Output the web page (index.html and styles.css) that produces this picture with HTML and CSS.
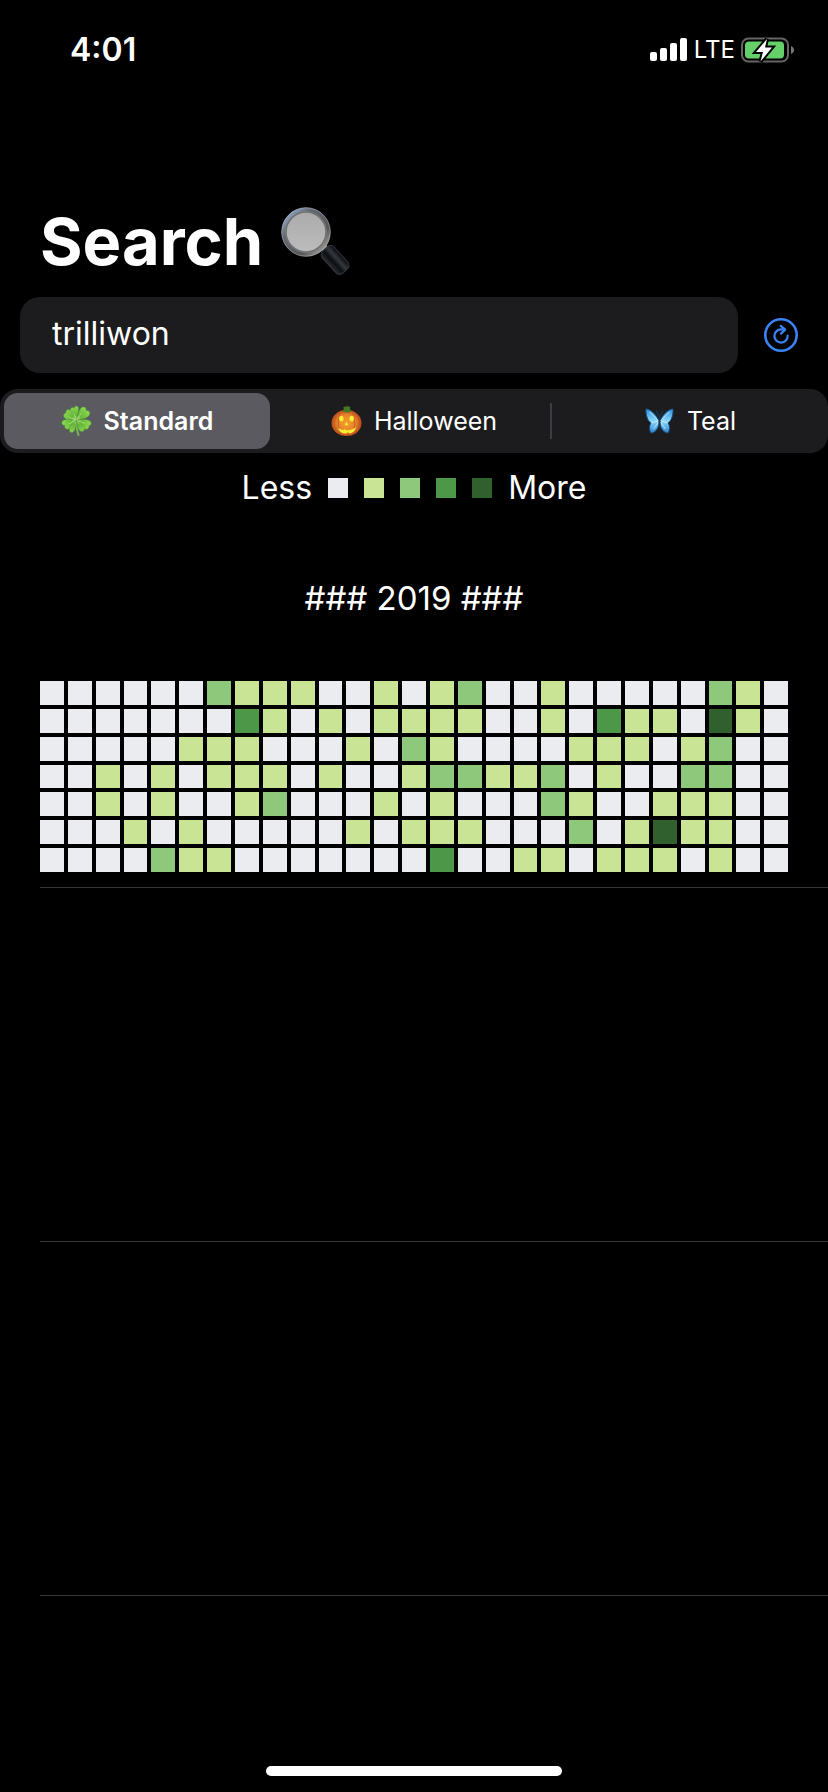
FILE: index.html
```html
<!DOCTYPE html>
<html lang="en">
<head>
<meta charset="utf-8">
<meta name="viewport" content="width=device-width, initial-scale=1">
<title>Search</title>
<link rel="stylesheet" href="styles.css">
</head>
<body>
<header class="status">
  <time class="status-time">4:01</time>
  <div class="status-icons">
    <svg class="signal" viewBox="0 0 38 24" aria-hidden="true">
      <g fill="#fff"><rect x="0" y="14" width="7" height="9" rx="2"/><rect x="10" y="10" width="7" height="13" rx="2"/><rect x="20" y="5" width="7" height="18" rx="2"/><rect x="30" y="0" width="7" height="23" rx="2"/></g>
    </svg>
    <span class="carrier">LTE</span>
    <svg class="battery" viewBox="0 0 54 26" aria-hidden="true">
      <rect x="1" y="1.500" width="46" height="23" rx="6.500" fill="none" stroke="#656565" stroke-width="2"/>
      <path d="M50 9c4 1.500 4 6.500 0 8z" fill="#777"/>
      <rect x="4" y="4.500" width="39" height="17" rx="4" fill="#65cf6a"/>
      <path d="M26 2 15 15h7L19.500 24.500 31 10.500h-7z" fill="#fff" stroke="#000" stroke-width="4" paint-order="stroke"/>
    </svg>
  </div>
</header>

<main>
  <h1 class="title">Search
    <svg class="lens" viewBox="0 0 70 70" role="img" aria-label="magnifying glass">
      <defs>
        <linearGradient id="rim" x1="0" y1="0" x2="1" y2="1"><stop offset="0" stop-color="#a5c0e6"/><stop offset=".3" stop-color="#646b74"/><stop offset=".7" stop-color="#555"/><stop offset="1" stop-color="#c4bdb5"/></linearGradient>
        <linearGradient id="glass" x1="0" y1="0" x2="0" y2="1"><stop offset="0" stop-color="#aaa"/><stop offset="1" stop-color="#bdbdbd"/></linearGradient>
        <linearGradient id="grip" x1="0" y1="1" x2="0" y2="0"><stop offset="0" stop-color="#2a2d31"/><stop offset=".35" stop-color="#0c0e11"/><stop offset=".65" stop-color="#34383e"/><stop offset="1" stop-color="#08090a"/></linearGradient>
      </defs>
      <path d="m40 42 5-4 3 3-5 5z" fill="#999"/>
      <rect x="39" y="45" width="30" height="16" rx="5" transform="rotate(48 54 53)" fill="url(#grip)" stroke="#33363a" stroke-width="1"/>
      <circle cx="25" cy="25" r="22.500" fill="url(#glass)" stroke="url(#rim)" stroke-width="4"/>
      <circle cx="25" cy="25" r="20" fill="none" stroke="#707070" stroke-width="1.500"/>
      <circle cx="25" cy="25" r="24.300" fill="none" stroke="#b8c0ca" stroke-width=".7" opacity=".7"/>
    </svg>
  </h1>

  <form class="search" onsubmit="return false">
    <input class="search-box" type="text" value="trilliwon" aria-label="User name" spellcheck="false" autocomplete="off">
    <button class="refresh" type="submit" aria-label="Refresh">
      <svg viewBox="0 0 36 36" fill="none" stroke="#3a83f7" aria-hidden="true">
        <circle cx="18" cy="18" r="15.700" stroke-width="2.600"/>
        <path d="M24.600 18.600a6.600 6.600 0 1 1-6.600-6.200h2.500" stroke-width="2.200" stroke-linecap="round"/>
        <path d="m17.800 8.800 4.400 3.800-4.200 4" stroke-width="2.200" stroke-linejoin="round" stroke-linecap="round"/>
      </svg>
    </button>
  </form>

  <fieldset class="segments" aria-label="Colour theme">
    <label class="segment">
      <input type="radio" name="theme" checked>
      <svg class="emoji" viewBox="0 0 30 32" aria-hidden="true">
        <defs><radialGradient id="leaf" gradientUnits="userSpaceOnUse" cx="15" cy="15" r="15"><stop offset="0" stop-color="#b9e878"/><stop offset=".35" stop-color="#65b63c"/><stop offset="1" stop-color="#90da50"/></radialGradient></defs>
        <path d="M14.500 16c.4 5 1 10 2.500 14" fill="none" stroke="#75b850" stroke-width="2" stroke-linecap="round"/>
        <g fill="url(#leaf)" stroke="#4e9a32" stroke-width=".5">
          <path d="M14.500 15C11 12 7 8 9 4c1-2 3-1.500 3.800-1C13 0 18 0 17 5c-.4 4-1.500 7-2.500 10z"/>
          <path d="M15 15c1-5 3-12 6-13 3-.6 4 1.500 3.500 3.500 3-.6 5 2 3 5-2 2.500-7 4-12.500 4.500z"/>
          <path d="M14.500 15C10 16 4 15 2.500 12c-1-2.500.5-4 2-4-.5-3 2-4.500 4.500-2.500 2.500 2 4.500 5 5.500 9.500z"/>
          <path d="M14 15.500C12 20 8 25 5 24c-2-.6-2-2.500-1.500-3.500-3 0-4-3-2.500-4.500 3-2.500 9-2 13-.5z"/>
          <path d="M14.500 16c.8 4-.5 11-4 11.500-2 .2-3.200-1.500-2.500-4 1-3 3-5.500 6.500-7.500z"/>
          <path d="M15.500 15.500c5-1.500 11-1.500 13.500 1 1.500 2 .5 4-1.500 4 .5 3-2 4.500-4 3.500-3-1-6-4.500-8-8.500z"/>
          <path d="M15.500 16c3 1 7 4.500 7.500 8 0 2.500-3.500 3.500-5 1.500-2-2.500-2.500-6-2.500-9.500z"/>
        </g>
        <path d="m15 15 5-7m-5 7-3-7m2.500 7L7 12m7 3.500L7 19m8.500-3.500 8 3" fill="none" stroke="#c5ee88" stroke-width=".6"/>
      </svg>
      <span>Standard</span>
    </label>
    <label class="segment">
      <input type="radio" name="theme">
      <svg class="emoji" viewBox="0 0 32 32" aria-hidden="true">
        <defs><radialGradient id="pumpkin"><stop offset="0" stop-color="#f3a12f"/><stop offset=".65" stop-color="#e5802a"/><stop offset="1" stop-color="#b94a1b"/></radialGradient></defs>
        <ellipse cx="16" cy="18" rx="15.500" ry="13.500" fill="url(#pumpkin)"/>
        <path d="M11 6C7 10 6 25 11 31M21 6c4 4 5 19 0 25M7 8C2 14 2 23 6 28M25 8c5 6 5 15 1 20" fill="none" stroke="#c65d20" stroke-width=".9"/>
        <path d="M12 6.500c1.500-1.500 1.500-3 .5-4.500C15 .500 18 .500 20 1.500c-1 2 0 3.500 1 5-3 1-6 1-9 0z" fill="#437823"/>
        <g fill="#f9ee35"><ellipse cx="10.700" cy="13.500" rx="2.300" ry="3"/><ellipse cx="21.300" cy="13.500" rx="2.300" ry="3"/><path d="m16 17 2 3.500h-4zM7 23c2 1.500 4 2 6 2.300l1-1 1.500 1.200 4-.2c2-.5 4-1 6.500-2.800-1 4-4 6-7 6.500L18 27.500 15.500 29C11 29 8.500 27 7 23z"/></g>
      </svg>
      <span>Halloween</span>
    </label>
    <label class="segment">
      <input type="radio" name="theme">
      <svg class="emoji" viewBox="0 0 30 32" aria-hidden="true">
        <defs><linearGradient id="wing" x1="0" y1="0" x2="0" y2="1"><stop offset="0" stop-color="#2d8fe0"/><stop offset=".5" stop-color="#8bd8fb"/><stop offset="1" stop-color="#2b83d0"/></linearGradient></defs>
        <g fill="url(#wing)" stroke="#184f7c" stroke-width="1" stroke-linejoin="round">
          <path d="M14 15C11 9 6 4 1.500 4c-.5 5 1.500 12 5 14-2 3-2 7 0 10 4 0 7-4 8-9z"/>
          <path d="M16 15c3-6 8-11 12.500-11 .5 5-1.500 12-5 14 2 3 2 7 0 10-4 0-7-4-8-9z"/>
        </g>
        <path d="M14 16 5 7m9 10-5 7m7-8 9-9m-9 10 5 7M7 18l7-2m9 2-7-2" stroke="#dff5ff" stroke-width=".9" opacity=".8"/>
        <path d="M15 11v13M14.500 12 12 6m3.500 6L18 6" fill="none" stroke="#17334b" stroke-width="1.400" stroke-linecap="round"/>
      </svg>
      <span>Teal</span>
    </label>
  </fieldset>

  <div class="legend">
    <span>Less</span>
    <i class="swatch level-0"></i><i class="swatch level-1"></i><i class="swatch level-2"></i><i class="swatch level-3"></i><i class="swatch level-4"></i>
    <span>More</span>
  </div>

  <ul class="years">
    <li class="year">
      <h2 class="year-title">### 2019 ###</h2>
      <div class="graph" id="graph" role="img" aria-label="Contributions in 2019"></div>
    </li>
    <li class="year"></li>
    <li class="year"></li>
  </ul>
</main>
<div class="home-indicator"></div>
<script src="graph.js"></script>
</body>
</html>
```
FILE: styles.css
```css
* { box-sizing: border-box; }

body {
  margin: 0;
  min-height: 100vh;
  background: #000;
  color: #fff;
  font-family: Inter, "Liberation Sans", sans-serif;
  font-size: 32px;
  line-height: 40px;
}

svg { display: block; flex: none; }

.status {
  display: flex;
  justify-content: space-between;
  align-items: center;
  height: 100px;
  padding: 0 33px 0 70px;
}
.status-time { font-size: 32px; font-weight: 600; }
.status-icons { display: flex; align-items: center; gap: 6px; }
.signal { width: 38px; height: 24px; }
.carrier { font-size: 24px; }
.battery { width: 54px; height: 26px; }

.title {
  display: flex;
  align-items: center;
  gap: 18px;
  margin: 0;
  padding: 100px 40px 0;
  font-size: 65px;
  line-height: 84px;
  font-weight: 700;
}
.lens { width: 70px; height: 70px; }

.search {
  display: flex;
  align-items: center;
  gap: 24px;
  padding: 13px 28px 0 20px;
}
.search-box {
  flex: 1;
  min-width: 0;
  height: 76px;
  padding: 0 32px 4px;
  border: 0;
  border-radius: 20px;
  outline: 0;
  background: #1c1c1e;
  color: #fff;
  font: inherit;
}
.refresh {
  width: 38px;
  height: 38px;
  padding: 1px;
  border: 0;
  background: none;
}
.refresh svg { width: 36px; height: 36px; }

.segments {
  display: grid;
  grid-template-columns: repeat(3, 1fr);
  min-width: 0;
  margin: 16px 0 0;
  padding: 4px 0;
  border: 0;
  border-radius: 18px;
  background: #1c1c1f;
  font-size: 25px;
}
.segment {
  position: relative;
  display: flex;
  justify-content: center;
  align-items: center;
  gap: 12px;
  height: 56px;
  border-radius: 14px;
}
.segment input { position: absolute; opacity: 0; }
.segment:has(input:checked) {
  margin: 0 6px 0 4px;
  background: #5b5a60;
  font-weight: 600;
}
.segment:last-child::before {
  content: "";
  position: absolute;
  left: -2px;
  height: 36px;
  border-left: 2px solid #3d3c42;
}
.emoji { width: 31px; height: 32px; }

.legend {
  display: flex;
  justify-content: center;
  align-items: center;
  gap: 16px;
  padding: 15px 0 26px;
}
.swatch { width: 20px; height: 20px; }

.years { margin: 0; padding: 0 0 0 40px; list-style: none; }
.year {
  min-height: 354px;
  padding: 44px 40px 0 0;
  border-bottom: 1px solid #38383a;
}
.year-title {
  margin: 0 0 63px -40px;
  padding-left: 40px;
  font-size: 33px;
  font-weight: 400;
  text-align: center;
}
.graph {
  display: grid;
  grid-template-columns: repeat(27, 1fr);
  gap: 4px;
}
.day { aspect-ratio: 1; }

.level-0 { background: #ebecf0; }
.level-1 { background: #cae495; }
.level-2 { background: #8dc87b; }
.level-3 { background: #4c9848; }
.level-4 { background: #2f602d; }

.home-indicator {
  position: fixed;
  left: 50%;
  bottom: 16px;
  width: 296px;
  height: 10px;
  margin-left: -148px;
  border-radius: 5px;
  background: #fff;
}
```
FILE: graph.js
```js
// One string per weekday, one digit per week: the contribution level.
const weekdays = [
  "000000211100101200100000210",
  "000000031010111100103110410",
  "000001110001021000011101200",
  "001010111010012211201002200",
  "001010012000101000210011100",
  "000101000001011100020141100",
  "000021100000003001101110100"
];
const graph = document.getElementById("graph");
for (const week of weekdays) {
  for (const level of week) {
    const day = document.createElement("span");
    day.className = "day level-" + level;
    graph.append(day);
  }
}
```
